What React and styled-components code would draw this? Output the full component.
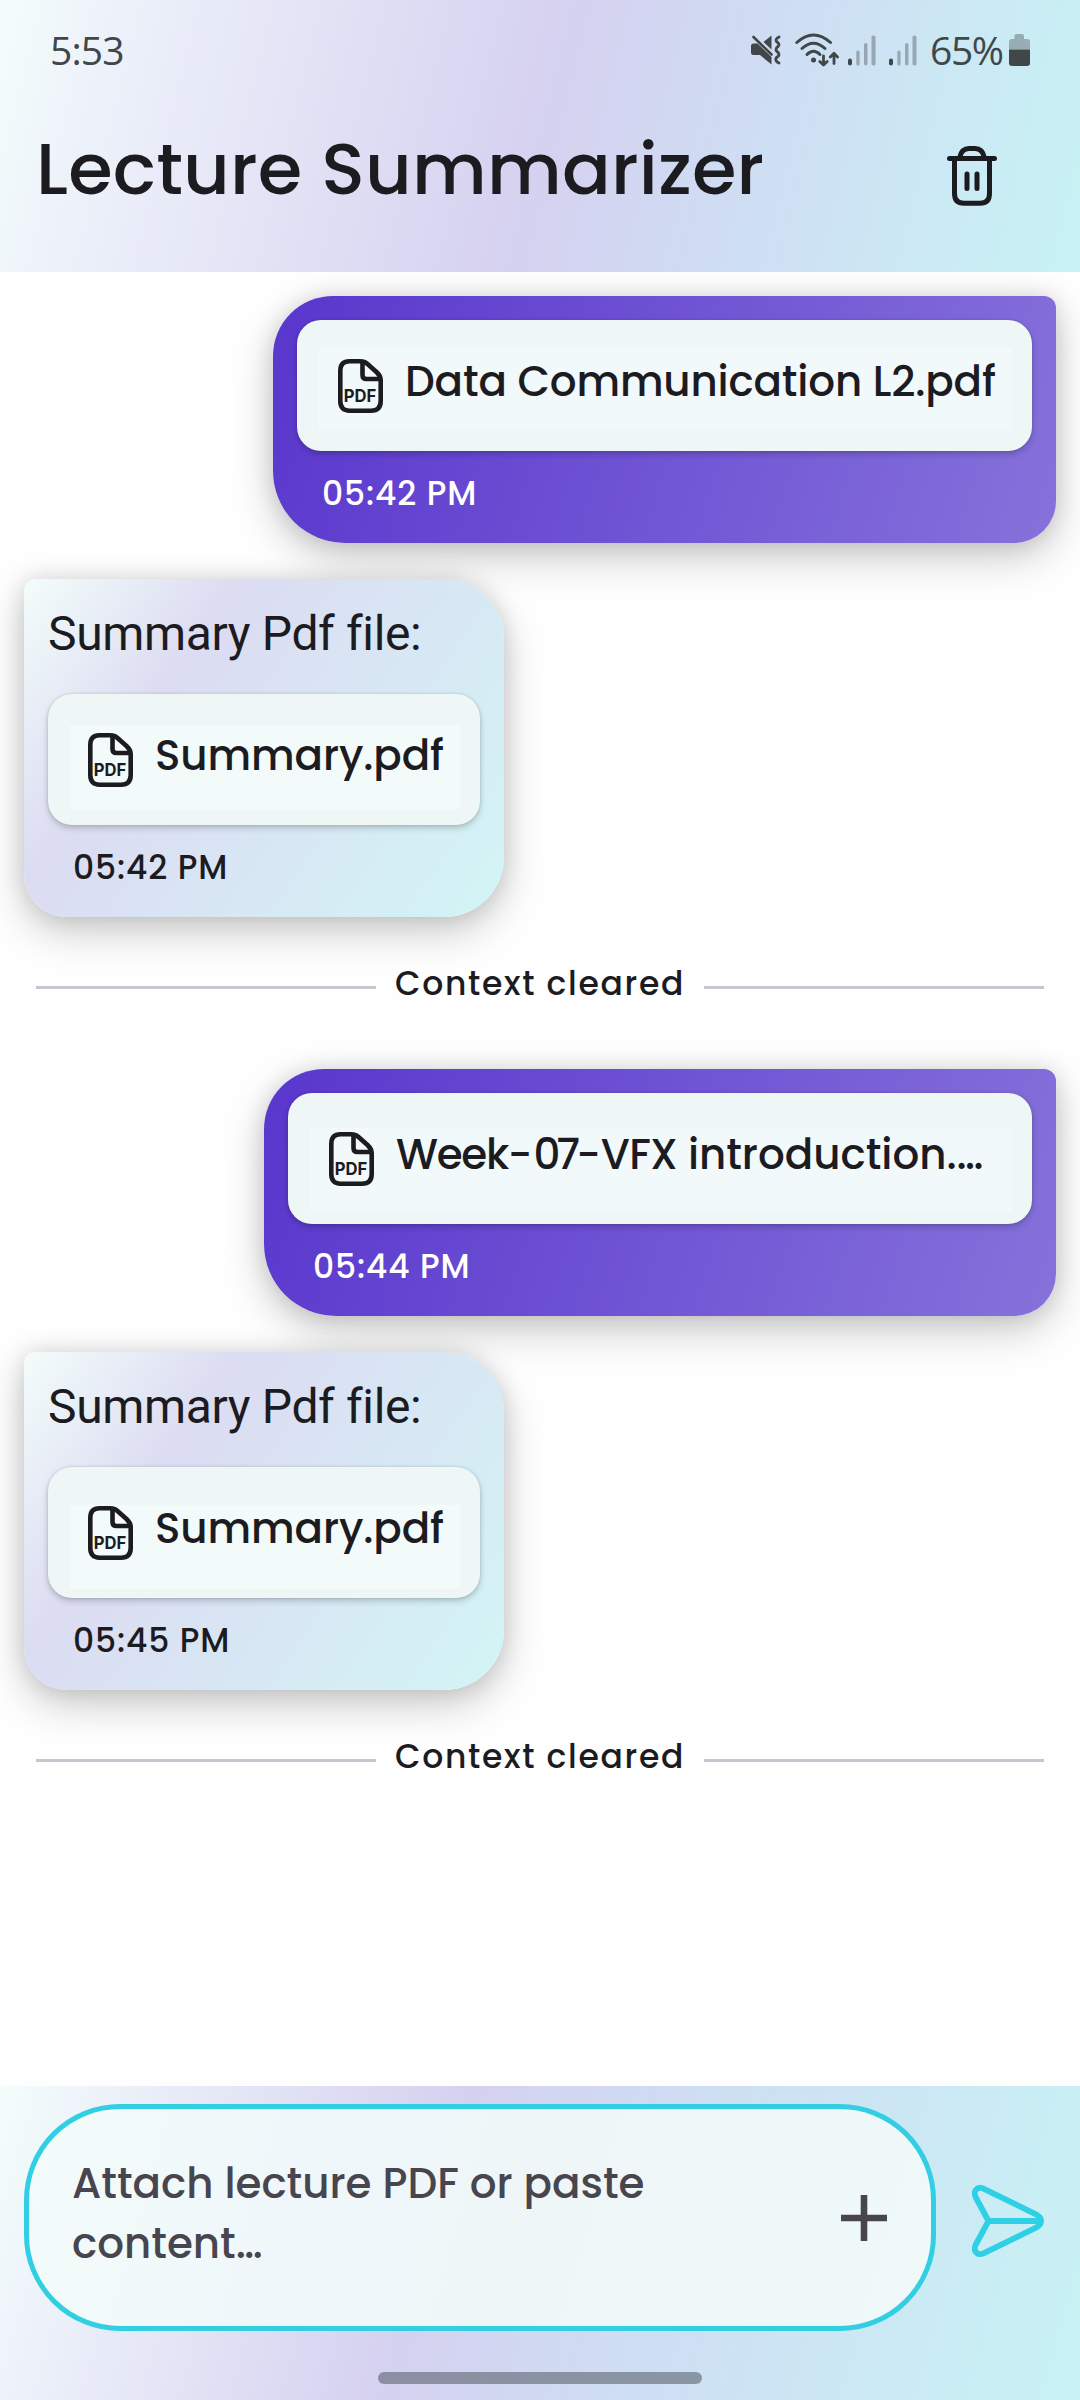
import React from "react";
import styled, { createGlobalStyle } from "styled-components";

const GlobalStyle = createGlobalStyle`
  *, *::before, *::after { box-sizing: border-box; }
  body { margin: 0; background: #fefefe; }
  svg { display: block; flex: none; }
`;

const geometric = `"Poppins", "Inter", "Open Sans", sans-serif`;

const Screen = styled.div`
  width: 1080px;
  height: 2400px;
  display: flex;
  flex-direction: column;
  overflow: hidden;
  background: #fefefe;
  color: #1c1b1f;
  font-family: ${geometric};
  font-weight: 500;
`;

const Header = styled.header`
  flex: none;
  height: 272px;
  background: linear-gradient(104.1deg, #f3fefb 0%, #eef3fa 9%, #d5d1f0 50%, #cfddf3 68%, #c8f3f5 100%);
`;

const StatusBar = styled.div`
  height: 100px;
  padding: 0 50px;
  display: flex;
  align-items: center;
  color: #414749;
  font-family: "Open Sans", "Noto Sans", sans-serif;
  font-weight: 400;
  font-size: 39px;
  line-height: 100px;
`;

const Clock = styled.span`
  flex: 1;
  letter-spacing: -0.9px;
`;

const StatusIcons = styled.div`
  display: flex;
  align-items: center;
`;

const StatusGlyph = styled.span`
  margin-right: ${(p) => p.$gap}px;
`;

const Battery = styled.span`
  margin-right: 7px;
  width: 72px;
  letter-spacing: -1.4px;
  white-space: nowrap;
`;

const TitleRow = styled.div`
  display: flex;
  justify-content: space-between;
  align-items: flex-start;
  padding: 0 83px 0 36px;
`;

const Title = styled.h1`
  margin: 0;
  font-size: 72px;
  font-weight: 500;
  line-height: 138px;
  letter-spacing: 0.18px;
`;

const IconButton = styled.button`
  appearance: none;
  border: 0;
  padding: 0;
  background: none;
  color: inherit;
  margin-top: ${(p) => p.$top || 0}px;
`;

const Chat = styled.main`
  flex: 1;
  min-height: 0;
  overflow: hidden;
  display: flex;
  flex-direction: column;
  padding: 24px;
`;

const Bubble = styled.article`
  flex: none;
  display: flex;
  flex-direction: column;
  width: ${(p) => p.$width}px;
  box-shadow: 0 15px 40px rgba(0, 0, 0, 0.2), 0 0 22px rgba(0, 0, 0, 0.12);
`;

const SentBubble = styled(Bubble)`
  align-self: flex-end;
  height: 247px;
  margin-bottom: 36px;
  padding: 24px 24px 7px;
  border-radius: 60px 12px 42px 72px;
  background: linear-gradient(107.5deg, #5936cd 0%, #8672db 100%);
  color: #fff;
`;

const ReceivedBubble = styled(Bubble)`
  align-self: flex-start;
  height: 338px;
  padding: 0 24px 7px;
  border-radius: 12px 60px 60px 42px;
  background: linear-gradient(125.2deg, #f3fdfa 0%, #dcdcf2 30%, #d8e6f4 58%, #d2f5f5 100%);
`;

const Message = styled.p`
  margin: 0 0 6px;
  font-family: Roboto, sans-serif;
  font-weight: 400;
  font-size: 48px;
  line-height: 109px;
  letter-spacing: -0.35px;
  white-space: nowrap;
`;

const FileCard = styled.div`
  flex: none;
  height: 131px;
  display: flex;
  align-items: flex-start;
  padding-left: ${(p) => p.$inset || 41}px;
  border-radius: 24px;
  color: #1c1b1f;
  background: linear-gradient(${(p) => p.$glow}, ${(p) => p.$glow}) no-repeat 22px ${(p) => p.$glowTop}px /
    calc(100% - 42px) 84px #eef7f6;
  box-shadow: 0 3px 6px rgba(0, 0, 0, 0.2), 0 0 3px rgba(0, 0, 0, 0.12);

  svg { margin-top: 39px; }
`;

const FileName = styled.span`
  margin-left: 22px;
  font-size: 42px;
  line-height: 124px;
  white-space: nowrap;
`;

const Tracked = styled.span`
  letter-spacing: ${(p) => p.$track}px;
`;

const Time = styled.time`
  padding-left: 25px;
  font-size: 33px;
  line-height: 85px;
  letter-spacing: 0.9px;
`;

const ContextDivider = styled.div`
  flex: none;
  height: 152px;
  padding: 0 12px 11px;
  display: flex;
  align-items: center;
  gap: 18px;

  &::before, &::after {
    content: "";
    flex: 1;
    height: 3px;
    background: #cac4d0;
  }
`;

const DividerLabel = styled.span`
  width: 292px;
  padding-bottom: 8px;
  text-align: center;
  font-size: 33px;
  letter-spacing: 1.7px;
  white-space: nowrap;
`;

const Composer = styled.footer`
  flex: none;
  height: 314px;
  display: flex;
  flex-direction: column;
  align-items: center;
  padding-top: 18px;
  background: linear-gradient(106.2deg, #f3fefb 0%, #eef3fa 8%, #d5d1f0 40%, #cfddf3 59%, #c8f3f5 100%);
`;

const ComposerRow = styled.div`
  width: 100%;
  display: flex;
  align-items: flex-start;
  padding: 0 36px 0 24px;
  justify-content: space-between;
  color: #2fd0e5;
`;

const Field = styled.div`
  width: 912px;
  height: 227px;
  display: flex;
  justify-content: space-between;
  align-items: flex-start;
  padding: 45px 44px 0 43px;
  border: 5px solid #32cfe3;
  border-radius: 96px;
  background: linear-gradient(106deg, #f3fcf9 0%, #eff7fa 30%, #eef6f8 55%, #f0f9fa 100%);
  color: #49454f;
`;

const Placeholder = styled.p`
  margin: 0;
  font-size: 42px;
  line-height: 60px;
`;

const HomeHandle = styled.div`
  width: 324px;
  height: 12px;
  margin-top: 41px;
  border-radius: 6px;
  background: rgba(75, 80, 92, 0.52);
`;

const stroke = { fill: "none", stroke: "currentColor", strokeLinecap: "round", strokeLinejoin: "round" };

const MuteIcon = () => (
  <svg width="30" height="30" viewBox="0 0 30 30" fill="currentColor">
    <path d="M2.500 8.500H6.500L20.500 22V29.500L9 20H2.500Q0 20 0 17.500V11Q0 8.500 2.500 8.500Z" />
    <path d="M20.500 0.500V14.500L12.500 7Z" />
    <path {...stroke} strokeWidth="2.600" d="M2.500 2L20.500 19.500" />
    <path {...stroke} strokeWidth="2.800" d="M28 2Q24 4 25.500 6.500Q29 9 27.500 11Q24 13.500 25.500 16Q29 18.500 27.500 21Q24 23 25 25.500Q25.500 27 28 28" />
  </svg>
);

const WifiIcon = () => (
  <svg width="44" height="34" viewBox="0 0 44 34">
    <g {...stroke} strokeWidth="3">
      <path d="M1.800 9.500Q18.500 -5.500 35.500 9.500" />
      <path d="M7 15.500Q18.500 5 30 15.500" />
      <path d="M12 21.500Q18.500 15 25 21.500" />
      <path strokeWidth="2.800" d="M28.500 23V31.500M24.800 28.500L28.500 32L32.200 28.500" />
      <path strokeWidth="2.800" d="M39 30.500V21M35.300 24L39 20.300L42.500 24" />
    </g>
    <circle cx="18.500" cy="27" r="2.500" fill="currentColor" />
  </svg>
);

const SignalIcon = () => (
  <svg width="28" height="31" viewBox="0 0 28 31" fill="currentColor">
    <rect x="0" y="23.500" width="4" height="7" rx="2" />
    <g opacity="0.38">
      <rect x="8.300" y="15.500" width="3.300" height="15" rx="1.600" />
      <rect x="16" y="8" width="3.500" height="22.500" rx="1.700" />
      <rect x="23.500" y="0.500" width="4" height="30" rx="1.800" />
    </g>
  </svg>
);

const BatteryIcon = () => (
  <svg width="21" height="32" viewBox="0 0 21 32" fill="currentColor">
    <path opacity="0.38" d="M5.500 5V2Q5.500 0 7.500 0H13Q15 0 15 2V5H18Q21 5 21 8V15.500H0V8Q0 5 3 5Z" />
    <path d="M0 15.500H21V29Q21 32 18 32H3Q0 32 0 29Z" />
  </svg>
);

const TrashIcon = () => (
  <svg width="50" height="60" viewBox="0 0 50 60" {...stroke} strokeWidth="5">
    <path d="M2.500 12.500H47.500M7.500 13V47.500Q7.500 57.300 17 57.300H33Q42.500 57.300 42.500 47.500V13M12.500 12Q14.500 2.600 22 2.600H28Q35.500 2.600 37.500 12M20 28V42.500M30 28V42.500" />
  </svg>
);

const PdfIcon = () => (
  <svg width="45" height="54" viewBox="0 0 45 54">
    <g {...stroke} strokeWidth="4.600">
      <path d="M11.500 2.300H22Q26.500 2.300 29.500 5L38.500 13Q42.700 17 42.700 21V42Q42.700 51.700 33 51.700H11.500Q2.300 51.700 2.300 42V12Q2.300 2.300 11.500 2.300Z" />
      <path d="M24.500 3V16Q24.500 20 28.500 20H42" />
    </g>
    <text x="5.800" y="42.500" fontFamily="Inter, sans-serif" fontSize="17.500" fontWeight="700" textLength="32.500" lengthAdjust="spacingAndGlyphs" fill="currentColor">PDF</text>
  </svg>
);

const PlusIcon = () => (
  <svg width="46" height="46" viewBox="0 0 46 46" fill="none" stroke="currentColor" strokeWidth="6.600">
    <path d="M0 23H46M23 0V46" />
  </svg>
);

const SendIcon = () => (
  <svg width="72" height="72" viewBox="0 0 72 72" {...stroke} strokeWidth="5.800">
    <path d="M16.500 36L3.800 12.500C0.500 6 5.500 0.800 12 3.800L64 29.300C70.800 33 70.800 39 64 42.700L12 68.200C5.500 71.200 0.500 66 3.800 59.500ZM16.500 36H68" />
  </svg>
);

const conversations = [
  {
    id: "l2",
    file: [["Data Communication L2.pdf", -0.16]],
    width: 783,
    sent: "05:42 PM",
    replied: "05:42 PM",
    glowTop: 27,
    replyGlowTop: 31,
  },
  {
    id: "w7",
    file: [["Week", -1.3], ["-", 1], ["07", -3.8], ["-", 0], ["VFX", -0.8], [" introduction.…", 0]],
    width: 792,
    sent: "05:44 PM",
    replied: "05:45 PM",
    glowTop: 35,
    replyGlowTop: 38,
  },
];

const Conversation = ({ item }) => (
  <>
    <SentBubble $width={item.width}>
      <FileCard $glow="#f1f9fb" $glowTop={item.glowTop}>
        <PdfIcon />
        <FileName>
          {item.file.map(([text, track], i) => <Tracked key={i} $track={track}>{text}</Tracked>)}
        </FileName>
      </FileCard>
      <Time>{item.sent}</Time>
    </SentBubble>
    <ReceivedBubble $width={480}>
      <Message>Summary Pdf file:</Message>
      <FileCard $inset={40} $glow="#f3fbfa" $glowTop={item.replyGlowTop}>
        <PdfIcon />
        <FileName><Tracked $track={-0.1}>Summary.pdf</Tracked></FileName>
      </FileCard>
      <Time>{item.replied}</Time>
    </ReceivedBubble>
    <ContextDivider>
      <DividerLabel>Context cleared</DividerLabel>
    </ContextDivider>
  </>
);

export default function App() {
  return (
    <>
      <GlobalStyle />
      <Screen>
        <Header>
          <StatusBar>
            <Clock>5:53</Clock>
            <StatusIcons>
              <StatusGlyph $gap={14}><MuteIcon /></StatusGlyph>
              <StatusGlyph $gap={9}><WifiIcon /></StatusGlyph>
              <StatusGlyph $gap={13}><SignalIcon /></StatusGlyph>
              <StatusGlyph $gap={13}><SignalIcon /></StatusGlyph>
              <Battery>65%</Battery>
              <BatteryIcon />
            </StatusIcons>
          </StatusBar>
          <TitleRow>
            <Title>Lecture Summarizer</Title>
            <IconButton $top={46} aria-label="Clear context"><TrashIcon /></IconButton>
          </TitleRow>
        </Header>
        <Chat>
          {conversations.map((item) => <Conversation key={item.id} item={item} />)}
        </Chat>
        <Composer>
          <ComposerRow>
            <Field>
              <Placeholder>Attach lecture PDF or paste<br />content…</Placeholder>
              <IconButton $top={41} aria-label="Attach file"><PlusIcon /></IconButton>
            </Field>
            <IconButton $top={81} aria-label="Send"><SendIcon /></IconButton>
          </ComposerRow>
          <HomeHandle />
        </Composer>
      </Screen>
    </>
  );
}
